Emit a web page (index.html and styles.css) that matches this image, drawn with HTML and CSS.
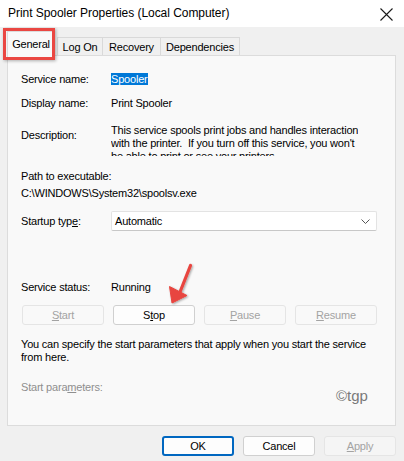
FILE: index.html
```html
<!DOCTYPE html>
<html lang="en">
<head>
  <meta charset="UTF-8" />
  <title>Print Spooler Properties</title>
  <link rel="stylesheet" href="styles.css">
</head>
<body>
  <div class="window">
    <div class="titlebar">
      <span class="title">Print Spooler Properties (Local Computer)</span>
      <svg class="close" width="13" height="13" viewBox="0 0 13 13">
        <path d="M0.5 0.5 L12.5 12.5 M12.5 0.5 L0.5 12.5" stroke="#1a1a1a" stroke-width="1.1" fill="none" />
      </svg>
    </div>

    <div class="client">
      <div class="tabs">
        <div class="tab active">General</div>
        <div class="tab logon">Log On</div>
        <div class="tab recovery">Recovery</div>
        <div class="tab deps">Dependencies</div>
      </div>

      <div class="panel">
        <div class="row first">
          <span class="label">Service name:</span>
          <span class="value"><span class="selected">Spooler</span></span>
        </div>
        <div class="row gap10">
          <span class="label">Display name:</span>
          <span class="value">Print Spooler</span>
        </div>
        <div class="row desc-row">
          <span class="label desc-label">Description:</span>
          <div class="desc">This service spools print jobs and handles interaction<br>with the printer.&nbsp; If you turn off this service, you won't<br>be able to print or see your printers.</div>
        </div>
        <div class="row path-label">Path to executable:</div>
        <div class="row path">C:\WINDOWS\System32\spoolsv.exe</div>
        <div class="row startup">
          <span class="label">Startup typ<u>e</u>:</span>
          <div class="combo">
            <span>Automatic</span>
            <svg width="9" height="5" viewBox="0 0 9 5">
              <path d="M0.5 0.5 L4.5 4.5 L8.5 0.5" stroke="#555" stroke-width="1" fill="none" />
            </svg>
          </div>
        </div>
        <div class="row status">
          <span class="label">Service status:</span>
          <span class="value">Running</span>
        </div>
        <div class="row buttons">
          <button class="btn" disabled><u>S</u>tart</button>
          <button class="btn">S<u>t</u>op</button>
          <button class="btn" disabled><u>P</u>ause</button>
          <button class="btn" disabled><u>R</u>esume</button>
        </div>
        <div class="row note">You can specify the start parameters that apply when you start the service<br>from here.</div>
        <div class="row params">Start para<u>m</u>eters:</div>
        <div class="watermark">©tgp</div>
      </div>

      <div class="footer">
        <button class="btn dlg default">OK</button>
        <button class="btn dlg">Cancel</button>
        <button class="btn dlg" disabled><u>A</u>pply</button>
      </div>
    </div>

    <div class="callout-box"></div>
    <svg class="callout-arrow" width="40" height="56" viewBox="160 258 40 56">
      <defs>
        <filter id="shadow" x="-50%" y="-50%" width="200%" height="200%">
          <feDropShadow dx="1" dy="1" stdDeviation="1.2" flood-color="#000" flood-opacity="0.35" />
        </filter>
      </defs>
      <g filter="url(#shadow)" fill="#e8453f" stroke="#e8453f">
        <path d="M190.5 265.5 L180 292" stroke-width="3.2" stroke-linecap="round" fill="none" />
        <path d="M172 303 L169.5 286.5 L187 295.5 Z" stroke-width="1" stroke-linejoin="round" />
      </g>
    </svg>
  </div>
</body>
</html>
```

FILE: styles.css
```css
html, body {
  margin: 0;
  padding: 0;
}
body {
  font-family: "Liberation Sans", Arial, sans-serif;
  font-size: 11px;
  color: #000;
  background: #f0f0f0;
}
.window {
  position: relative;
  width: 404px;
  height: 461px;
  overflow: hidden;
  background: #f0f0f0;
}
.titlebar {
  height: 27px;
  background: #fff;
  display: flex;
  align-items: center;
  justify-content: space-between;
  padding: 0 11px 0 8px;
  box-sizing: border-box;
}
.title {
  font-size: 12px;
  letter-spacing: -0.05px;
  line-height: 14px;
  margin-top: -1px;
}
.close {
  display: block;
  margin-top: 2px;
}
.client {
  padding: 4px 8px 0 7px;
  letter-spacing: -0.2px;
}
.tabs {
  display: flex;
  align-items: flex-end;
  height: 24px;
}
.tab {
  height: 18px;
  box-sizing: border-box;
  border: 1px solid #d9d9d9;
  border-bottom: none;
  background: #f0f0f0;
  line-height: 19px;
  text-align: center;
}
.tab.active {
  width: 48px;
  height: 25px;
  margin-bottom: -1px;
  background: #f9f9f9;
  line-height: 25px;
  position: relative;
  z-index: 1;
  border-color: #dcdcdc;
}
.tab.logon {
  width: 46px;
  margin-left: 2px;
}
.tab.recovery {
  width: 58px;
  border-left: none;
}
.tab.deps {
  width: 79px;
  border-left: none;
}
.panel {
  position: relative;
  height: 371px;
  box-sizing: border-box;
  border: 1px solid #dcdcdc;
  background: #f9f9f9;
  padding: 16px 18px 0 13px;
}
.row {
  display: flex;
  align-items: flex-start;
  line-height: 14px;
  white-space: nowrap;
}
.label {
  width: 90px;
  flex: none;
}
.first {
  margin-top: 0;
}
.gap10 {
  margin-top: 10px;
}
.selected {
  background: #0078d7;
  color: #fff;
}
.desc-row {
  margin-top: 14px;
}
.desc-label {
  line-height: 13px;
  margin-top: 5px;
}
.desc {
  line-height: 13px;
  height: 32px;
  overflow: hidden;
}
.path-label {
  margin-top: 13px;
}
.path {
  margin-top: 3px;
}
.startup {
  margin-top: 11px;
  align-items: center;
}
.combo {
  width: 266px;
  height: 20px;
  box-sizing: border-box;
  background: #fff;
  border: 1px solid #e3e3e3;
  border-bottom-color: #c8c8c8;
  border-radius: 2px;
  display: flex;
  align-items: center;
  justify-content: space-between;
  padding: 0 6px 0 3px;
}
.combo svg {
  display: block;
}
.status {
  margin-top: 49px;
}
.buttons {
  margin-top: 11px;
  gap: 9px;
  padding-left: 1px;
}
.btn {
  font-family: inherit;
  font-size: 11px;
  letter-spacing: -0.2px;
  color: #000;
  width: 82px;
  height: 20px;
  padding: 0;
  background: #fdfdfd;
  border: 1px solid #d0d0d0;
  border-radius: 3px;
  line-height: 17px;
}
.btn:disabled {
  color: #a3a3a3;
  background: #f9f9f9;
  border-color: #e5e5e5;
}
.note {
  margin-top: 13px;
  line-height: 13px;
}
.params {
  margin-top: 16px;
  color: #8f8f8f;
}
.watermark {
  position: absolute;
  left: 328px;
  top: 331px;
  font-size: 15px;
  letter-spacing: 0;
  color: #7a7a7a;
}
.footer {
  display: flex;
  justify-content: flex-end;
  gap: 9px;
  margin-top: 10px;
}
.btn.dlg {
  width: 72px;
  background: #fdfdfd;
}
.btn.dlg:disabled {
  background: #f5f5f5;
}
.btn.default {
  border: 2px solid #0067c0;
  line-height: 15px;
}
.callout-box {
  position: absolute;
  left: 3px;
  top: 28px;
  width: 52px;
  height: 32px;
  box-sizing: border-box;
  border: 3px solid #ea4742;
  box-shadow: 1px 1px 3px rgba(0, 0, 0, 0.3);
  z-index: 2;
}
.callout-arrow {
  position: absolute;
  left: 160px;
  top: 258px;
  z-index: 2;
}
```
